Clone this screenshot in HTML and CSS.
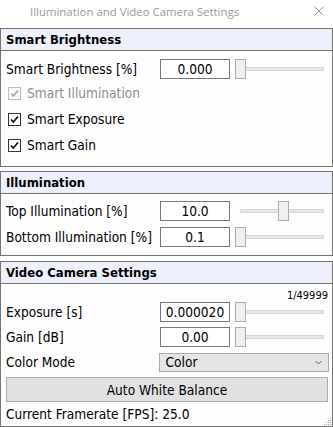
FILE: index.html
```html
<!DOCTYPE html>
<html>
<head>
<meta charset="utf-8">
<link rel="stylesheet" href="styles.css">
</head>
<body>
<div class="window">
  <div class="titlebar">
    <span class="title">Illumination and Video Camera Settings</span>
    <svg class="close" width="10" height="10" viewBox="0 0 10 10"><path d="M0.5 0.5 L9.5 9.5 M9.5 0.5 L0.5 9.5" stroke="#9a9a9a" stroke-width="1"/></svg>
  </div>

  <div class="group g1">
    <div class="group-head">Smart Brightness</div>
    <div class="group-body">
      <div class="row">
        <span class="label">Smart Brightness [%]</span>
        <div class="input">0.000</div>
        <div class="slider"><div class="track"></div><div class="thumb" style="left:0px"></div></div>
      </div>
      <div class="check disabled">
        <svg width="13" height="13" viewBox="0 0 13 13"><rect x="0.5" y="0.5" width="12" height="12" fill="#fff" stroke="#bcbcbc"/><path d="M3 6.5 L5.3 9 L10 3.5" fill="none" stroke="#a8a8a8" stroke-width="1.7"/></svg>
        <span>Smart Illumination</span>
      </div>
      <div class="check">
        <svg width="13" height="13" viewBox="0 0 13 13"><rect x="0.5" y="0.5" width="12" height="12" fill="#fff" stroke="#333"/><path d="M3 6.5 L5.3 9 L10 3.5" fill="none" stroke="#111" stroke-width="1.7"/></svg>
        <span>Smart Exposure</span>
      </div>
      <div class="check">
        <svg width="13" height="13" viewBox="0 0 13 13"><rect x="0.5" y="0.5" width="12" height="12" fill="#fff" stroke="#333"/><path d="M3 6.5 L5.3 9 L10 3.5" fill="none" stroke="#111" stroke-width="1.7"/></svg>
        <span>Smart Gain</span>
      </div>
    </div>
  </div>

  <div class="group g2">
    <div class="group-head">Illumination</div>
    <div class="group-body">
      <div class="row">
        <span class="label">Top Illumination [%]</span>
        <div class="input">10.0</div>
        <div class="slider"><div class="track"></div><div class="thumb" style="left:43px"></div></div>
      </div>
      <div class="row">
        <span class="label">Bottom Illumination [%]</span>
        <div class="input">0.1</div>
        <div class="slider"><div class="track"></div><div class="thumb" style="left:0px"></div></div>
      </div>
    </div>
  </div>

  <div class="group g3">
    <div class="group-head">Video Camera Settings</div>
    <div class="group-body">
      <div class="hint">1/49999</div>
      <div class="row">
        <span class="label">Exposure [s]</span>
        <div class="input">0.000020</div>
        <div class="slider"><div class="track"></div><div class="thumb" style="left:0px"></div></div>
      </div>
      <div class="row">
        <span class="label">Gain [dB]</span>
        <div class="input">0.00</div>
        <div class="slider"><div class="track"></div><div class="thumb" style="left:0px"></div></div>
      </div>
      <div class="row">
        <span class="label">Color Mode</span>
        <div class="select"><span>Color</span>
          <svg width="7" height="5" viewBox="0 0 7 5"><path d="M0.5 1 L3.5 4 L6.5 1" fill="none" stroke="#666" stroke-width="1"/></svg>
        </div>
      </div>
      <div class="button">Auto White Balance</div>
      <div class="fps">Current Framerate [FPS]: 25.0</div>
    </div>
    <svg class="grip" width="10" height="10" viewBox="0 0 10 10">
      <rect x="8" y="2" width="1" height="1" fill="#a0a0a0"/>
      <rect x="6" y="4" width="1" height="1" fill="#a0a0a0"/>
      <rect x="8" y="4" width="1" height="1" fill="#a0a0a0"/>
      <rect x="4" y="6" width="1" height="1" fill="#a0a0a0"/>
      <rect x="6" y="6" width="1" height="1" fill="#a0a0a0"/>
      <rect x="8" y="6" width="1" height="1" fill="#a0a0a0"/>
      <rect x="2" y="8" width="1" height="1" fill="#a0a0a0"/>
      <rect x="4" y="8" width="1" height="1" fill="#a0a0a0"/>
      <rect x="6" y="8" width="1" height="1" fill="#a0a0a0"/>
      <rect x="8" y="8" width="1" height="1" fill="#a0a0a0"/>
    </svg>
  </div>
</div>
</body>
</html>
```

FILE: styles.css
```css
html, body {
  margin: 0;
  padding: 0;
  background: #fdfdfd;
}
.window {
  width: 333px;
  height: 427px;
  overflow: hidden;
  font-family: "DejaVu Sans Condensed", "DejaVu Sans", sans-serif;
  font-size: 13.6px;
  color: #000;
  display: flex;
  flex-direction: column;
}
.titlebar {
  height: 28px;
  position: relative;
  display: flex;
  align-items: center;
  background: #fff;
}
.title {
  font-family: "Open Sans", "Noto Sans", sans-serif;
  font-size: 11.4px;
  color: #9a9a9a;
  margin-left: 30px;
  margin-top: -5px;
}
.close {
  position: absolute;
  right: 9px;
  top: 6px;
}
.group {
  border: 1px solid #747474;
  background: #fdfdfd;
  position: relative;
}
.g2 {
  margin-top: 4px;
}
.g3 {
  margin-top: 5px;
  flex: 1;
}
.group-head {
  height: 21px;
  line-height: 22px;
  background: #eef0fc;
  border-bottom: 1px solid #747474;
  font-weight: bold;
  font-size: 13px;
  padding-left: 5px;
}
.group-body {
  padding: 8px 3px 0 5px;
  display: flex;
  flex-direction: column;
}
.g1 .group-body {
  padding-top: 8px;
  padding-bottom: 9px;
  gap: 2px;
}
.g2 .group-body {
  padding-top: 7px;
  padding-bottom: 8px;
  gap: 6px;
}
.g3 .group-body {
  padding-top: 5px;
  gap: 5px;
}
.row {
  display: flex;
  align-items: center;
  height: 20px;
}
.label {
  width: 154px;
  white-space: nowrap;
}
.input {
  width: 68px;
  height: 18px;
  border: 1px solid #7a7a7a;
  background: #fff;
  text-align: center;
  line-height: 19px;
}
.slider {
  position: relative;
  width: 89px;
  height: 20px;
  margin-left: 5px;
}
.track {
  position: absolute;
  left: 5px;
  right: 0;
  top: 8px;
  height: 2px;
  background: #e7e7e7;
  border: 1px solid #d6d6d6;
}
.thumb {
  position: absolute;
  top: 0;
  width: 9px;
  height: 18px;
  background: #f0f0f0;
  border: 1px solid #adadad;
}
.check {
  display: flex;
  align-items: center;
  height: 24px;
  gap: 6px;
  padding-left: 2px;
}
.check svg {
  flex: none;
}
.check.disabled span {
  color: #8d8d8d;
}
.hint {
  text-align: right;
  font-size: 11px;
  line-height: 13px;
  margin-bottom: -5px;
  padding-right: 1px;
}
.select {
  width: 158px;
  height: 17px;
  border: 1px solid #acacac;
  background: #e5e5e5;
  display: flex;
  align-items: center;
  justify-content: space-between;
  padding: 0 6px 0 6px;
}
.select span {
  line-height: 17px;
}
.button {
  height: 23px;
  border: 1px solid #adadad;
  background: #e1e1e1;
  text-align: center;
  line-height: 24px;
  margin-right: 1px;
}
.fps {
  line-height: 18px;
  margin-top: -2px;
}
.grip {
  position: absolute;
  right: 0;
  bottom: 0;
}
```
